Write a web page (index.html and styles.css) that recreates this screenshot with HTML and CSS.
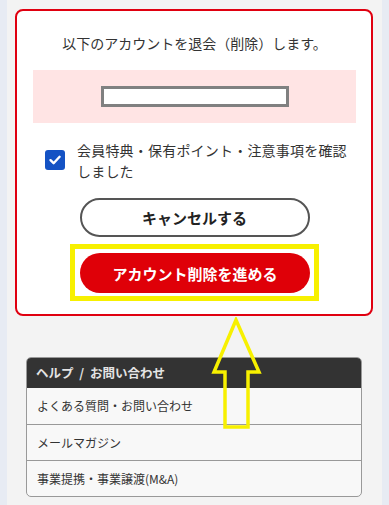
FILE: index.html
```html
<!DOCTYPE html>
<html>
  <head>
    <meta charset="utf-8">
    <title>退会</title>
    <link rel="stylesheet" href="styles.css">
  </head>
  <body>
    <div class="page">
      <div class="withdraw-card">
        <p class="lead">以下のアカウントを退会（削除）します。</p>
        <div class="account-box">
          <div class="account-field"></div>
        </div>
        <label class="confirm">
          <span class="checkbox">
            <svg width="14" height="14" viewBox="0 0 14 14"><path d="M2.5 7.2 L5.6 10.2 L11.6 3.8" fill="none" stroke="#fff" stroke-width="2.4" stroke-linecap="round" stroke-linejoin="round"/></svg>
          </span>
          <span class="confirm-text">会員特典・保有ポイント・注意事項を確認しました</span>
        </label>
        <div class="actions">
          <button class="btn btn-cancel">キャンセルする</button>
          <div class="highlight">
            <button class="btn btn-delete">アカウント削除を進める</button>
          </div>
        </div>
      </div>

      <div class="help">
        <div class="help-head">ヘルプ / お問い合わせ</div>
        <div class="help-item">よくある質問・お問い合わせ</div>
        <div class="help-item">メールマガジン</div>
        <div class="help-item">事業提携・事業譲渡(M&amp;A)</div>
      </div>

      <svg class="arrow" width="60" height="120" viewBox="0 0 60 120">
        <polygon points="26,3 4,55 15,55 15,110 38,110 38,55 49,55" fill="none" stroke="#f7f000" stroke-width="3.5" stroke-linejoin="miter"/>
      </svg>
    </div>
  </body>
</html>
```

FILE: styles.css
```css
* {
  box-sizing: border-box;
}

body {
  margin: 0;
  background: #e7ebf3;
  font-family: "Noto Sans CJK JP", "Noto Sans", sans-serif;
  color: #333;
}

.page {
  position: relative;
  margin: 0 7px;
  min-height: 505px;
  background: #f3f3f3;
  padding: 9px 9px 8px 8px;
}

.withdraw-card {
  background: #fff;
  border: 2px solid #e00010;
  border-radius: 8px;
  padding: 22px 15px 13px 16px;
}

.lead {
  margin: 0;
  text-align: center;
  font-size: 14px;
  line-height: 20px;
}

.account-box {
  margin-top: 17px;
  height: 53px;
  background: #ffe4e4;
  display: flex;
  align-items: center;
  justify-content: center;
}

.account-field {
  width: 188px;
  height: 21px;
  background: #fff;
  border: 3px solid #808080;
}

.confirm {
  display: flex;
  align-items: flex-start;
  gap: 12px;
  margin-top: 17px;
  padding-left: 12px;
  padding-right: 8px;
}

.checkbox {
  flex: none;
  width: 20px;
  height: 20px;
  margin-top: 10px;
  border-radius: 3px;
  background: #1452c4;
  display: flex;
  align-items: center;
  justify-content: center;
}

.confirm-text {
  font-size: 14px;
  line-height: 21px;
  letter-spacing: 0.2px;
}

.actions {
  display: flex;
  flex-direction: column;
  align-items: center;
  margin-top: 16px;
}

.btn {
  display: block;
  width: 230px;
  height: 39px;
  border-radius: 20px;
  font-family: inherit;
  font-size: 15px;
  font-weight: bold;
  cursor: pointer;
}

.btn-cancel {
  background: #fff;
  border: 2px solid #555;
  color: #222;
}

.highlight {
  margin-top: 7px;
  border: 5px solid #f7f000;
  padding: 4px 4px 3px 5px;
}

.btn-delete {
  height: 40px;
  background: #df0008;
  border: none;
  color: #fff;
}

.help {
  margin: 41px 11px 0 11px;
  border: 1px solid #999;
  border-radius: 5px;
  overflow: hidden;
  background: #f8f8f8;
}

.help-head {
  background: #333;
  color: #e4e4e4;
  font-size: 12.5px;
  font-weight: bold;
  word-spacing: 3px;
  height: 30px;
  line-height: 30px;
  padding-left: 9px;
}

.help-item {
  height: 36px;
  line-height: 35px;
  padding-left: 10px;
  font-size: 12px;
  color: #333;
  border-top: 1px solid #999;
}

.help-head + .help-item {
  border-top: none;
}

.arrow {
  position: absolute;
  left: 203px;
  top: 317px;
}
```
